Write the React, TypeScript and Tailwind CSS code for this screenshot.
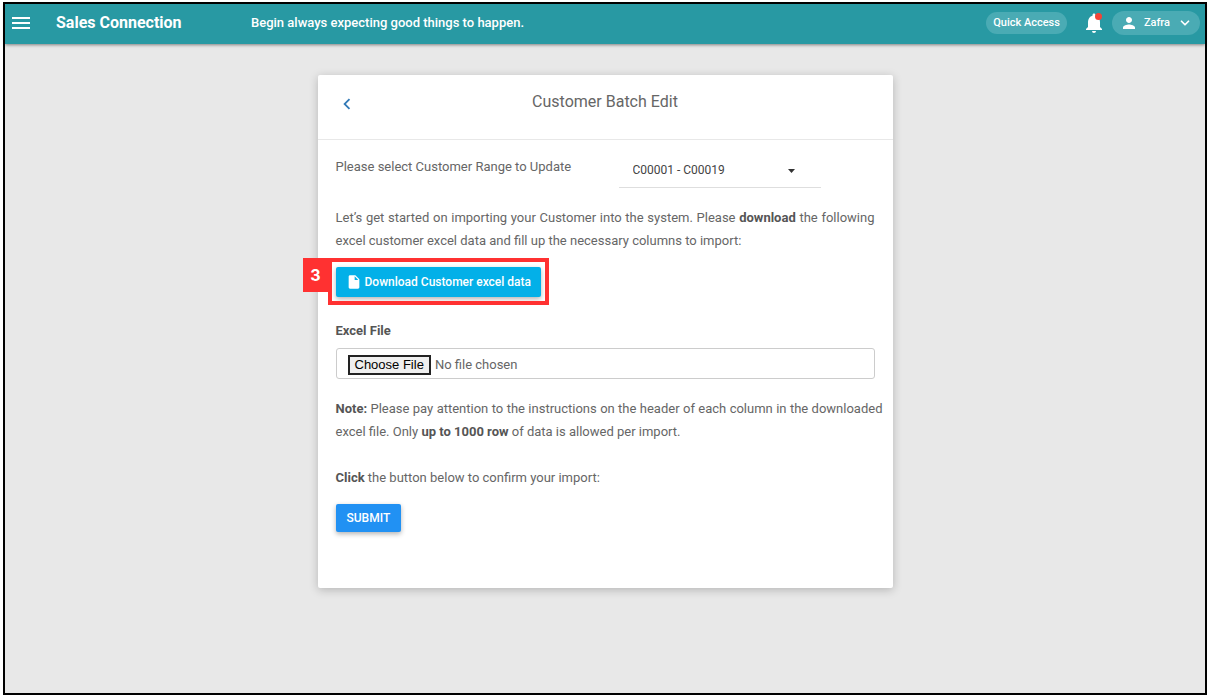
import React from "react";
import {
  MdInsertDriveFile,
  MdKeyboardArrowLeft,
  MdMenu,
  MdNotifications,
  MdPerson,
} from "react-icons/md";
import { ChevronDown } from "lucide-react";

function TopBar() {
  return (
    <header className="relative z-10 flex h-10 items-center bg-[#2899a3] pr-[5px] pb-0.5 pl-1 text-white shadow-[0_1px_3px_rgba(0,0,0,0.45)]">
      <button type="button" aria-label="Menu" className="flex">
        <MdMenu size={24} />
      </button>
      <a href="#" className="ml-[23px] w-[195px] text-[16px] leading-5 font-bold">
        Sales Connection
      </a>
      <p className="flex-1 text-[13px] leading-5 font-medium">
        Begin always expecting good things to happen.
      </p>
      <button
        type="button"
        className="h-[22px] rounded-full bg-[#4aabb4] px-[7px] text-[11px] leading-5 font-medium"
      >
        Quick Access
      </button>
      <button type="button" aria-label="Notifications" className="relative ml-[15px] flex">
        <MdNotifications size={24} />
        <span className="absolute top-0.5 right-1 size-[7px] rounded-full bg-[#f44336]" />
      </button>
      <button
        type="button"
        className="ml-1.5 flex h-6 items-center rounded-full bg-[#4aabb4] pr-2 pl-2 text-[11px] font-medium"
      >
        <MdPerson size={18} />
        <span className="ml-1.5">Zafra</span>
        <ChevronDown size={14} strokeWidth={3} className="ml-2" />
      </button>
    </header>
  );
}

function RangeSelect() {
  return (
    <div className="flex justify-between pr-[54px]">
      <label htmlFor="range" className="pt-0.5 leading-[23px]">
        Please select Customer Range to Update
      </label>
      <div className="relative w-[202px]">
        <select
          id="range"
          className="h-[35px] w-full appearance-none border-b border-[#dedede] bg-transparent pl-[14px] text-[12px] text-[#444] outline-none"
        >
          <option>C00001 - C00019</option>
        </select>
        <svg
          className="pointer-events-none absolute top-4 right-[26px]"
          width="7"
          height="4"
          viewBox="0 0 7 4"
          fill="#333"
        >
          <path d="M0 0h7L3.5 4z" />
        </svg>
      </div>
    </div>
  );
}

function DownloadStep() {
  return (
    <div className="relative mt-[15px] w-fit">
      <button
        type="button"
        className="flex h-[30px] items-center rounded-[2px] bg-[#03b0e8] px-2.5 text-[12px] font-medium text-white shadow-[0_2px_5px_rgba(0,0,0,0.3)]"
      >
        <MdInsertDriveFile size={16} />
        <span className="ml-[3px]">Download Customer excel data</span>
      </button>
      <div className="pointer-events-none absolute -inset-x-2 -top-[9px] -bottom-2 border-4 border-[#ff3131]" />
      <span className="absolute -top-[9px] -left-[33px] flex h-[34px] w-[26px] items-center justify-center bg-[#ff3131] font-[Inter,sans-serif] text-[16px] font-bold text-white">
        3
      </span>
    </div>
  );
}

export default function App() {
  return (
    <div className="min-h-screen bg-white pt-0.5 pr-[3px] pb-1 pl-[3px] font-[Roboto,sans-serif]">
      <div className="flex min-h-[calc(100vh-6px)] flex-col border-2 border-black bg-[#e8e8e8]">
        <TopBar />
        <main className="flex-1 px-4 py-[31px]">
          <section className="mx-auto w-full max-w-[575px] rounded-[2px] bg-white pb-14 text-[13px] leading-[23px] text-[#666] shadow-[0_2px_10px_rgba(0,0,0,0.22)]">
            <div className="grid h-[65px] grid-cols-[1fr_auto_1fr] border-b border-[#e8e8e8] px-[18px]">
              <a href="#" aria-label="Back" className="flex w-6 pt-[18px] text-[#337ab7]">
                <MdKeyboardArrowLeft size={22} />
              </a>
              <h1 className="pt-[15px] text-[16px] leading-[23px]">Customer Batch Edit</h1>
            </div>
            <form className="px-[18px] pt-[13px]" onSubmit={(e) => e.preventDefault()}>
              <RangeSelect />
              <p className="mt-[18px] text-justify">
                Let’s get started on importing your Customer into the system. Please{" "}
                <b className="text-[#555]">download</b> the following excel customer excel data and
                fill up the necessary columns to import:
              </p>
              <DownloadStep />
              <label htmlFor="file" className="mt-[22px] block font-bold text-[#555]">
                Excel File
              </label>
              <input
                id="file"
                type="file"
                className="mt-[6px] block h-[31px] w-full rounded-[3px] border border-[#ccc] px-[11px] pt-1.5 text-[13px] leading-5 file:mr-1 file:h-5 file:border-2 file:border-[#222] file:bg-[#efefef] file:px-[5px] file:font-['Liberation_Sans',sans-serif] file:text-[13px] file:leading-4 file:text-black"
              />
              <p className="mt-[18px] -mr-2 text-justify">
                <b className="text-[#555]">Note:</b> Please pay attention to the instructions on the
                header of each column in the downloaded excel file. Only{" "}
                <b className="text-[#555]">up to 1000 row</b> of data is allowed per import.
              </p>
              <p className="mt-[23px]">
                <b className="text-[#555]">Click</b> the button below to confirm your import:
              </p>
              <button
                type="submit"
                className="mt-[15px] flex h-7 items-center rounded-[2px] bg-[#2191f3] px-[11px] text-[12px] font-medium text-white shadow-[0_2px_5px_rgba(0,0,0,0.3)]"
              >
                SUBMIT
              </button>
            </form>
          </section>
        </main>
      </div>
    </div>
  );
}
